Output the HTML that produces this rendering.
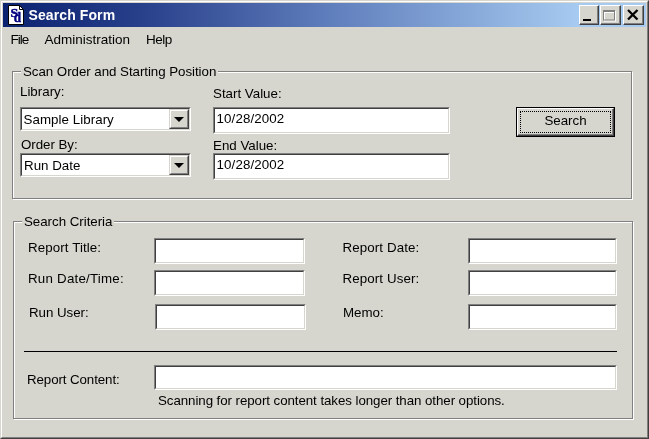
<!DOCTYPE html>
<html>
<head>
<meta charset="utf-8">
<title>Search Form</title>
<style>
html,body{margin:0;padding:0;}
body{width:649px;height:439px;overflow:hidden;background:#D6D6CE;font-family:"Liberation Sans",Arial,sans-serif;font-size:13.33px;color:#000;}
#win{position:absolute;left:0;top:0;width:649px;height:439px;background:#D6D6CE;box-sizing:border-box;
 border-top:1px solid #D6D6CE;border-left:1px solid #D6D6CE;border-right:1px solid #404040;border-bottom:1px solid #404040;}
#win2{position:absolute;left:1px;top:1px;width:647px;height:437px;box-sizing:border-box;
 border-top:1px solid #fff;border-left:1px solid #fff;border-right:1px solid #808080;border-bottom:1px solid #808080;}
.abs{position:absolute;white-space:nowrap;line-height:16px;}
#title{position:absolute;left:3px;top:3px;width:643px;height:24px;background:linear-gradient(to right,#0A2270 0%,#283F8A 21.3%,#5F7EBC 50.8%,#A6CAF0 89.5%,#A6CAF0 100%);}
#ttext{position:absolute;left:25.5px;top:4px;letter-spacing:0.1px;color:#fff;font-weight:bold;font-size:14px;line-height:16px;white-space:nowrap;}
.tbtn{position:absolute;top:5px;height:20px;width:21px;background:#D6D6CE;box-sizing:border-box;
 border-top:1px solid #fff;border-left:1px solid #fff;border-right:1px solid #404040;border-bottom:1px solid #404040;}
.tbtn:after{content:"";position:absolute;left:0;top:0;right:0;bottom:0;border-right:1px solid #808080;border-bottom:1px solid #808080;}
.menu{position:absolute;top:32px;font-size:13.5px;line-height:16px;white-space:nowrap;}
.grp{position:absolute;box-sizing:border-box;border:1px solid #808080;box-shadow:1px 1px 0 #fff, inset 1px 1px 0 #fff;}
.gl{position:absolute;background:#D6D6CE;white-space:nowrap;line-height:16px;padding:0 2px;}
.inp{position:absolute;box-sizing:border-box;background:#fff;
 border-top:1px solid #808080;border-left:1px solid #808080;border-right:1px solid #fff;border-bottom:1px solid #fff;}
.inp:after{content:"";position:absolute;left:0;top:0;right:0;bottom:0;border-top:1px solid #404040;border-left:1px solid #404040;border-right:1px solid #D6D6CE;border-bottom:1px solid #D6D6CE;}
.inp span{position:absolute;white-space:nowrap;line-height:16px;}
.cbtn{position:absolute;right:1px;top:1px;bottom:1px;width:20px;background:#D6D6CE;box-sizing:border-box;z-index:2;
 border-top:1px solid #D6D6CE;border-left:1px solid #D6D6CE;border-right:1px solid #404040;border-bottom:1px solid #404040;}
.cbtn:before{content:"";position:absolute;left:0;top:0;right:0;bottom:0;border-top:1px solid #fff;border-left:1px solid #fff;border-right:1px solid #808080;border-bottom:1px solid #808080;}
.cbtn:after{content:"";position:absolute;left:3.5px;top:7px;border-left:5px solid transparent;border-right:5px solid transparent;border-top:5.5px solid #000;}
</style>
</head>
<body><div id="root" style="position:absolute;left:0;top:0;width:649px;height:439px;will-change:transform">
<div id="win"></div><div id="win2"></div>
<div id="title">
 <svg style="position:absolute;left:5px;top:2px" width="17" height="20" viewBox="0 0 17 20">
  <path d="M0.5 0.5 H11.5 L15.5 4.5 V19.5 H0.5 Z" fill="#fff" stroke="#000" stroke-width="1"/>
  <path d="M11.5 0.5 V4.5 H15.5" fill="none" stroke="#000" stroke-width="1"/>
  <text transform="translate(2.6 12) scale(1.2 1)" font-family="Liberation Serif, serif" font-weight="bold" font-size="11.5" fill="#000080" stroke="#000080" stroke-width="0.5">S</text>
  <text transform="translate(5.8 16.8) scale(0.85 1)" font-family="Liberation Serif, serif" font-weight="bold" font-size="15.5" fill="#000080" stroke="#000080" stroke-width="0.5">d</text>
 </svg>
 <div id="ttext">Search Form</div>
</div>
<div class="tbtn" style="left:579px;width:20px"><svg style="position:absolute;left:3px;top:13px" width="8" height="3"><rect width="8" height="2" fill="#000"/></svg></div>
<div class="tbtn" style="left:600px"><svg style="position:absolute;left:2px;top:4px" width="14" height="12"><rect x="1.5" y="1.5" width="11" height="9.5" fill="none" stroke="#fff" stroke-width="1"/><rect x="1" y="1" width="12" height="2" fill="#fff"/><rect x="0.5" y="0.5" width="11" height="9.5" fill="none" stroke="#808080" stroke-width="1"/><rect x="0" y="0" width="12" height="2" fill="#808080"/></svg></div>
<div class="tbtn" style="left:623px"><svg style="position:absolute;left:3px;top:3px" width="12" height="12" viewBox="0 0 12 12"><path d="M1 1 L10.5 10.5 M10.5 1 L1 10.5" stroke="#000" stroke-width="2.3" fill="none"/></svg></div>

<div class="menu" style="left:10.5px;letter-spacing:-1px">File</div>
<div class="menu" style="left:44.5px">Administration</div>
<div class="menu" style="left:146px;letter-spacing:-0.5px">Help</div>

<!-- group 1 -->
<div class="grp" style="left:12px;top:71px;width:620px;height:128px"></div>
<div class="gl" style="left:21px;top:64px;letter-spacing:-0.05px">Scan Order and Starting Position</div>
<div class="abs" style="left:20px;top:84px">Library:</div>
<div class="abs" style="left:21px;top:137px;letter-spacing:-0.05px">Order By:</div>
<div class="abs" style="left:213px;top:86px">Start Value:</div>
<div class="abs" style="left:213px;top:138px">End Value:</div>
<div class="inp" style="left:20px;top:107px;width:171px;height:24px"><span style="left:2.5px;top:4px;letter-spacing:0.05px">Sample Library</span><div class="cbtn"></div></div>
<div class="inp" style="left:20px;top:153px;width:171px;height:24px"><span style="left:3px;top:4px">Run Date</span><div class="cbtn"></div></div>
<div class="inp" style="left:213px;top:107px;width:237px;height:27px"><span style="left:2.5px;top:3px;letter-spacing:0.12px">10/28/2002</span></div>
<div class="inp" style="left:213px;top:153px;width:237px;height:27px"><span style="left:2.5px;top:3px;letter-spacing:0.12px">10/28/2002</span></div>

<!-- Search button -->
<div style="position:absolute;left:516px;top:107px;width:99px;height:30px;box-sizing:border-box;border:1px solid #000;background:#D6D6CE">
 <div style="position:absolute;left:0;top:0;right:0;bottom:0;border-top:1px solid #fff;border-left:1px solid #fff;border-right:1px solid #404040;border-bottom:1px solid #404040"></div>
 <div style="position:absolute;left:1px;top:1px;right:1px;bottom:1px;border-right:1px solid #808080;border-bottom:1px solid #808080"></div>
 <div style="position:absolute;left:3px;top:3px;right:3px;bottom:3px;border:1px dotted #000"></div>
 <div style="position:absolute;left:0;right:0;top:5px;text-align:center;line-height:16px">Search</div>
</div>

<!-- group 2 -->
<div class="grp" style="left:13px;top:221px;width:620px;height:198px"></div>
<div class="gl" style="left:22px;top:214px;letter-spacing:-0.03px">Search Criteria</div>
<div class="abs" style="left:28px;top:240px;letter-spacing:0.1px">Report Title:</div>
<div class="abs" style="left:28px;top:271px;letter-spacing:0.22px">Run Date/Time:</div>
<div class="abs" style="left:29px;top:305px;letter-spacing:-0.05px">Run User:</div>
<div class="abs" style="left:342.5px;top:240px;letter-spacing:0.1px">Report Date:</div>
<div class="abs" style="left:342.5px;top:271px;letter-spacing:0.1px">Report User:</div>
<div class="abs" style="left:343px;top:305px">Memo:</div>
<div class="abs" style="left:27px;top:372px;letter-spacing:-0.1px">Report Content:</div>
<div class="abs" style="left:158px;top:393px;letter-spacing:-0.075px">Scanning for report content takes longer than other options.</div>
<div class="inp" style="left:154px;top:238px;width:151px;height:26px"></div>
<div class="inp" style="left:154px;top:270px;width:151px;height:26px"></div>
<div class="inp" style="left:155px;top:304px;width:151px;height:26px"></div>
<div class="inp" style="left:468px;top:238px;width:149px;height:26px"></div>
<div class="inp" style="left:468px;top:270px;width:149px;height:26px"></div>
<div class="inp" style="left:468px;top:304px;width:149px;height:26px"></div>
<div class="inp" style="left:154px;top:365px;width:463px;height:25px"></div>
<div style="position:absolute;left:24px;top:351px;width:593px;height:1px;background:#000"></div>
</div></body>
</html>
